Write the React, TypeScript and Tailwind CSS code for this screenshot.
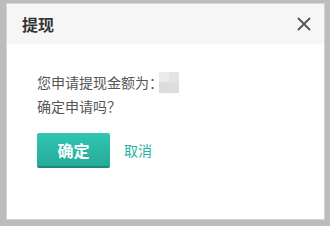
import React from "react";

export default function App() {
  return (
    <div
      className="w-[330px] h-[226px] bg-[#bcbcbc] pt-[3px] pl-[6px]"
      style={{ fontFamily: '"Noto Sans CJK SC", "Noto Sans", sans-serif' }}
    >
      <div className="w-[319px] h-[217px] bg-white border border-[#d4d4d4] flex flex-col">
        <div className="h-[40px] bg-[#f6f6f6] flex items-center justify-between pl-[15px] pr-[13px]">
          <span className="text-[16px] font-bold text-[#333]">提现</span>
          <svg width="14" height="14" viewBox="0 0 14 14">
            <path d="M1 1L13 13M13 1L1 13" stroke="#555" strokeWidth="1.8" />
          </svg>
        </div>
        <div className="pl-[30px] pt-[26px] text-[14px] leading-[24px] text-[#555]">
          <div className="flex items-center">
            <span>
              您申请提现金额为<span className="tracking-[-4px]">：</span>
            </span>
            <span className="inline-flex w-[20px] h-[21px]">
              <span className="flex flex-col w-[10px]">
                <span className="h-[10px] bg-[#ececec]" />
                <span className="flex-1 bg-[#dcdcdc]" />
              </span>
              <span className="flex flex-col w-[10px]">
                <span className="h-[10px] bg-[#e3e3e3]" />
                <span className="flex-1 bg-[#dedede]" />
              </span>
            </span>
          </div>
          <div>确定申请吗？</div>
        </div>
        <div className="pl-[30px] pt-[15px] flex items-center">
          <button className="w-[73px] h-[35px] rounded-[2px] bg-gradient-to-b from-[#30c6b3] to-[#27aa99] border-b-2 border-[#1b8a7c] text-white text-[16px] font-bold flex items-center justify-center">
            确定
          </button>
          <span className="ml-[14px] text-[14px] text-[#25b3a3]">取消</span>
        </div>
      </div>
    </div>
  );
}
